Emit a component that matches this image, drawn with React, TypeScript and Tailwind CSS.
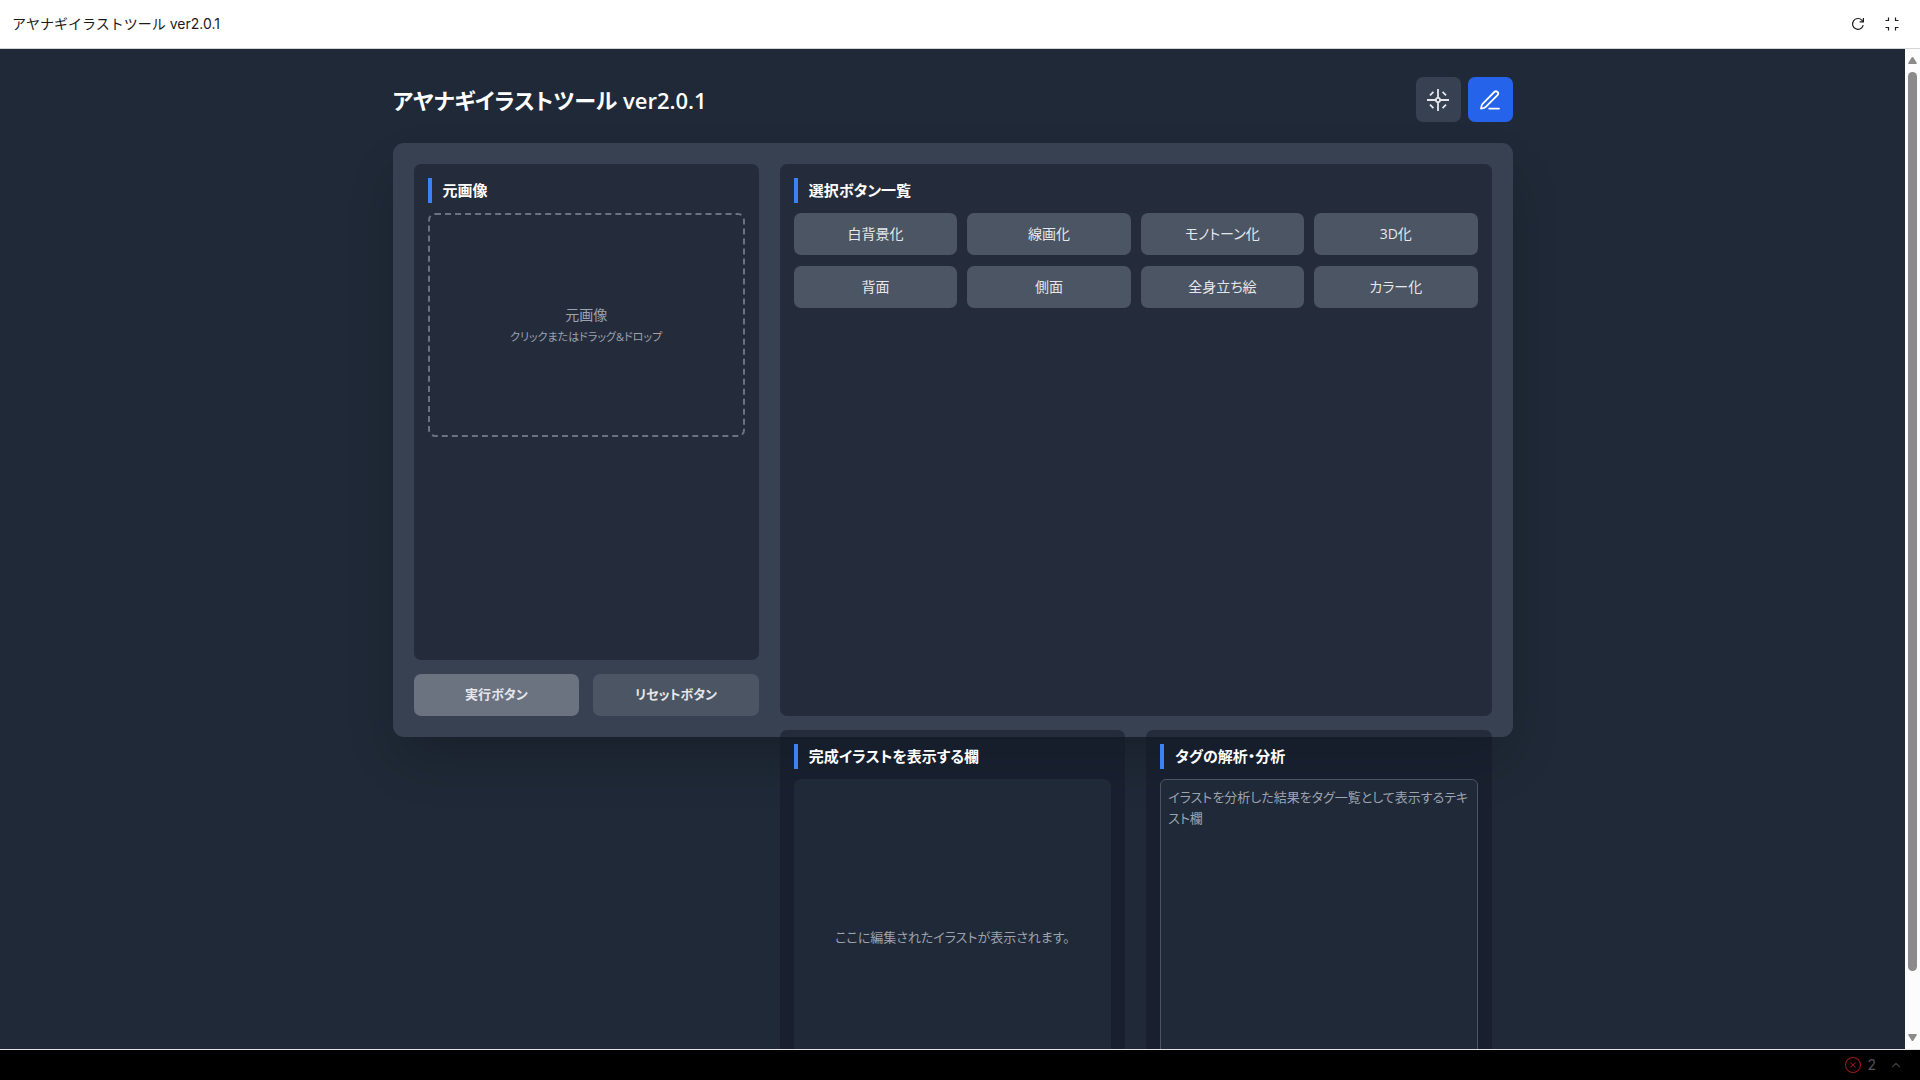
import { useState } from 'react';
import { ChevronUp, CircleX } from 'lucide-react';

const CONVERSIONS = [
  '白背景化',
  '線画化',
  'モノトーン化',
  '3D化',
  '背面',
  '側面',
  '全身立ち絵',
  'カラー化',
];

const TargetIcon = () => (
  <svg width="22" height="22" viewBox="0 0 22 22" fill="none" stroke="currentColor" strokeWidth="1.8">
    <circle cx="11" cy="11" r="2.1" />
    <path d="M11 0v9M11 13v9M0 11h9M13 11h9" />
    <path d="M3 6.3l3.4-3.4M15.6 2.9l3.4 3.4M3 15.7l3.4 3.4M19 15.7l-3.4 3.4" />
  </svg>
);

const PenIcon = () => (
  <svg
    width="24"
    height="24"
    viewBox="0 0 24 24"
    fill="none"
    stroke="currentColor"
    strokeWidth="1.8"
    strokeLinecap="round"
    strokeLinejoin="round"
  >
    <path d="M16.3 4a2.2 2.2 0 0 1 3.2 3.2L7.8 18.9Q6.5 20.2 3 20.6Q3.3 17.1 4.6 15.8z" />
    <path d="M11.2 20.6H21" />
  </svg>
);

const ReloadIcon = () => (
  <svg width="14" height="14" viewBox="0 0 14 14" fill="none" stroke="currentColor" strokeWidth="1.2">
    <path d="M12.2 8.2A5.4 5.4 0 1 1 10.8 3.1L12.2 4.6" />
    <path d="M12.4 1v3.8H8.6" />
  </svg>
);

const ShrinkIcon = () => (
  <svg width="14" height="14" viewBox="0 0 14 14" fill="none" stroke="currentColor" strokeWidth="1.2">
    <path d="M.5 3.5h3V.5M10.5.5v3h3M.5 10.5h3v3M10.5 13.5v-3h3" />
  </svg>
);

const SectionTitle = ({ children }: { children: string }) => (
  <h2 className="mb-[10px] border-l-4 border-[#3b82f6] pl-[11px] text-[15px] leading-[25px] font-bold text-white">
    {children}
  </h2>
);

const App = () => {
  const [tags, setTags] = useState('');

  return (
    <div className="flex h-screen flex-col overflow-hidden bg-black font-['Open_Sans','Noto_Sans_CJK_JP',sans-serif]">
      {/* Window bar */}
      <header className="flex h-[49px] shrink-0 items-center justify-between border-b border-[#d4d4d4] bg-white px-3 text-[#1b1b1b]">
        <span className="font-['Inter','Noto_Sans_CJK_JP',sans-serif] text-sm">
          アヤナギイラストツール ver2.0.1
        </span>
        <div className="flex items-center gap-5 pr-[9px]">
          <button aria-label="再読み込み">
            <ReloadIcon />
          </button>
          <button aria-label="縮小">
            <ShrinkIcon />
          </button>
        </div>
      </header>

      <div className="flex min-h-0 flex-1 border-b border-[#e5e5e5]">
        <main className="min-w-0 flex-1 overflow-hidden bg-[#1f2937] px-7 pt-7 [font-feature-settings:'palt']">
          <div className="mx-auto max-w-[1120px]">
            <div className="mb-[21px] flex items-center justify-between">
              <h1 className="text-[22px] leading-8 font-semibold text-white">
                アヤナギイラストツール ver2.0.1
              </h1>
              <div className="flex gap-[7px] text-[#e5e7eb]">
                <button
                  aria-label="ターゲット"
                  className="flex size-[45px] items-center justify-center rounded-[7px] bg-[#374151]"
                >
                  <TargetIcon />
                </button>
                <button
                  aria-label="編集"
                  className="flex size-[45px] items-center justify-center rounded-[7px] bg-[#2563eb] text-white"
                >
                  <PenIcon />
                </button>
              </div>
            </div>

            {/* The result row runs past the bottom of the card */}
            <div className="h-[594px] rounded-[11px] bg-[#374151] p-[21px] shadow-[0_25px_50px_-12px_rgba(0,0,0,0.25)]">
              <div className="grid grid-cols-3 grid-rows-[552px_auto] gap-x-[21px] gap-y-[14px]">
                <div className="flex flex-col gap-[14px]">
                  <section className="flex-1 rounded-[7px] bg-[#111827]/50 p-[14px]">
                    <SectionTitle>元画像</SectionTitle>
                    <button className="flex h-56 w-full flex-col items-center justify-center rounded-[7px] border-2 border-dashed border-[#6b7280] text-[#9ca3af]">
                      <span className="text-[14px] leading-6">元画像</span>
                      <span className="text-[11px] leading-5">クリックまたはドラッグ&amp;ドロップ</span>
                    </button>
                  </section>
                  <div className="grid grid-cols-2 gap-[14px] text-[13px] font-bold text-[#e5e7eb]">
                    <button className="h-[42px] rounded-[7px] bg-[#6b7280]">実行ボタン</button>
                    <button className="h-[42px] rounded-[7px] bg-[#4b5563]">リセットボタン</button>
                  </div>
                </div>

                <section className="col-span-2 rounded-[7px] bg-[#111827]/50 p-[14px]">
                  <SectionTitle>選択ボタン一覧</SectionTitle>
                  <div className="grid grid-cols-4 gap-x-[10px] gap-y-[11px]">
                    {CONVERSIONS.map((name) => (
                      <button
                        key={name}
                        className="h-[42px] rounded-[7px] bg-[#4b5563] pb-0.5 text-[14px] text-[#e5e7eb]"
                      >
                        {name}
                      </button>
                    ))}
                  </div>
                </section>

                <section className="col-start-2 rounded-[7px] bg-[#111827]/50 p-[14px]">
                  <SectionTitle>完成イラストを表示する欄</SectionTitle>
                  <div className="flex h-[318px] items-center justify-center rounded-[7px] bg-[#1f2937] text-[13px] text-[#9ca3af]">
                    ここに編集されたイラストが表示されます。
                  </div>
                </section>

                <section className="rounded-[7px] bg-[#111827]/50 p-[14px]">
                  <SectionTitle>タグの解析・分析</SectionTitle>
                  <textarea
                    aria-label="タグの解析・分析"
                    value={tags}
                    onChange={(e) => setTags(e.target.value)}
                    placeholder="イラストを分析した結果をタグ一覧として表示するテキスト欄"
                    className="block h-[318px] w-full resize-none rounded-[6px] border border-[#4b5563] bg-[#1f2937] p-[7px] text-[13px] leading-[21px] text-white placeholder:text-[#9ca3af]"
                  />
                </section>
              </div>
            </div>
          </div>
        </main>

        {/* Scroll track */}
        <div className="flex w-[15px] shrink-0 flex-col items-center bg-[#fcfcfc] py-2 text-[#8b8b8b]">
          <svg width="9" height="7" viewBox="0 0 9 7" fill="currentColor">
            <path d="M4.5 0Q5 0 5.4.6L8.8 6Q9 7 8 7H1Q0 7 .2 6L3.6.6Q4 0 4.5 0z" />
          </svg>
          <div className="mt-2 mb-[63px] w-[9px] flex-1 rounded-full bg-[#8b8b8b]" />
          <svg width="9" height="7" viewBox="0 0 9 7" fill="currentColor">
            <path d="M4.5 7Q5 7 5.4 6.4L8.8 1Q9 0 8 0H1Q0 0 .2 1L3.6 6.4Q4 7 4.5 7z" />
          </svg>
        </div>
      </div>

      {/* Status bar */}
      <footer className="flex h-[30px] shrink-0 items-center justify-end gap-[5px] px-[17px] text-sm text-[#52525b]">
        <CircleX size={18} strokeWidth={1.4} className="text-[#991b1b]" />
        <span className="font-['Inter',sans-serif]">2</span>
        <button aria-label="ログを開く" className="ml-2 text-[#3a3a3a]">
          <ChevronUp size={14} />
        </button>
      </footer>
    </div>
  );
};

export default App;
